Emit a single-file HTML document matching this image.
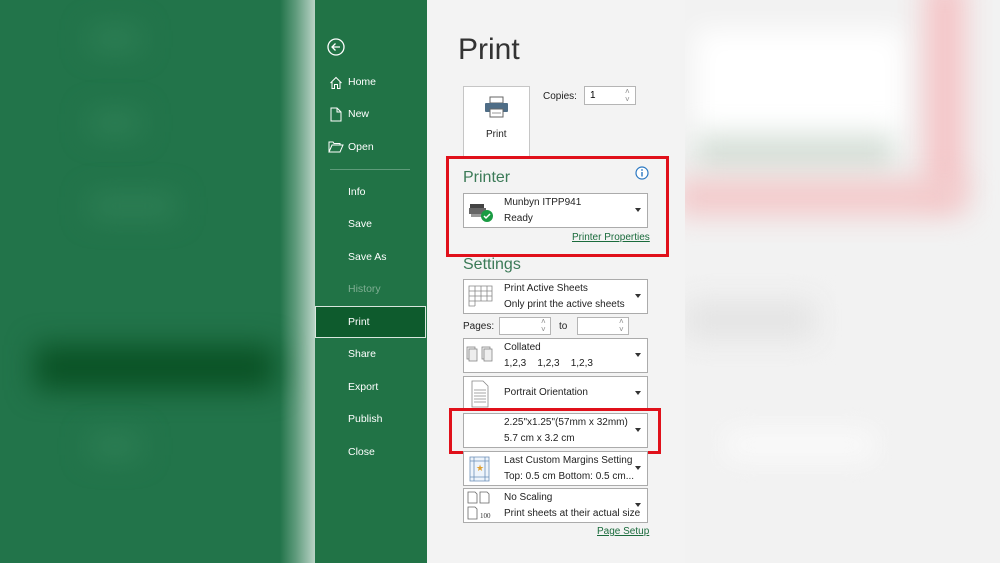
<!DOCTYPE html>
<html><head><style>
*{margin:0;padding:0;box-sizing:border-box}
body{width:1000px;height:563px;overflow:hidden;position:relative;font-family:"Segoe UI","Liberation Sans",sans-serif;background:#f2f2f2}
.abs{position:absolute}
.blur{filter:blur(14px)}
.nav{position:absolute;left:348px;color:#fff;font-size:10.5px}
.box{position:absolute;left:463px;width:185px;background:#fff;border:1px solid #ababab;font-size:10px;color:#222}
.box .t{position:absolute;left:40px}
.arr{position:absolute;right:6px;width:0;height:0;border-left:3.5px solid transparent;border-right:3.5px solid transparent;border-top:4px solid #333}
.red{position:absolute;border:3px solid #e0101a}
a{color:#1a6b3c;text-decoration:underline;font-size:10px}
.spin{position:absolute;font-size:8px;color:#888;line-height:8px}
</style></head><body>
<!-- left blurred -->
<div class="abs" style="left:0;top:0;width:300px;height:563px;background:#22744a"></div>
<div class="abs" style="left:280px;top:0;width:35px;height:563px;background:linear-gradient(90deg,#22744a,#5f9b7c 45%,#b9d3c6)"></div>
<div class="abs blur" style="left:35px;top:345px;width:240px;height:45px;background:#0a5225"></div>
<div class="abs blur" style="left:90px;top:28px;width:50px;height:22px;background:#2f8056"></div>
<div class="abs blur" style="left:90px;top:112px;width:50px;height:22px;background:#2f8056"></div>
<div class="abs blur" style="left:90px;top:195px;width:85px;height:22px;background:#2f8056"></div>
<div class="abs blur" style="left:90px;top:435px;width:50px;height:22px;background:#2f8056"></div>
<!-- right blurred -->
<div class="abs" style="left:685px;top:0;width:315px;height:563px;background:#f2f2f2;overflow:hidden">
 <div class="abs blur" style="left:10px;top:30px;width:210px;height:130px;background:#fff"></div>
 <div class="abs blur" style="left:10px;top:135px;width:200px;height:35px;background:#d3ddd5"></div>
 <div class="abs blur" style="left:240px;top:-20px;width:40px;height:215px;background:#f4c4c6"></div>
 <div class="abs blur" style="left:-10px;top:180px;width:290px;height:35px;background:#f3c7c8"></div>
 <div class="abs blur" style="left:0;top:300px;width:130px;height:40px;background:#e4e4e4"></div>
 <div class="abs blur" style="left:40px;top:430px;width:150px;height:30px;background:#fafafa"></div>
</div>
<!-- sidebar -->
<div class="abs" style="left:315px;top:0;width:112px;height:563px;background:#217346"></div>
<svg class="abs" style="left:326px;top:37px" width="20" height="20" viewBox="0 0 20 20"><circle cx="10" cy="10" r="8" fill="none" stroke="#fff" stroke-width="1.3"/><path d="M14 10H6M9.5 6.5L6 10l3.5 3.5" fill="none" stroke="#fff" stroke-width="1.3"/></svg>
<svg class="abs" style="left:329px;top:76px" width="14" height="14" viewBox="0 0 14 14"><path d="M1.5 7L7 1.5 12.5 7M3 5.5V12.5H5.5V8.5H8.5V12.5H11V5.5" fill="none" stroke="#fff" stroke-width="1"/></svg>
<svg class="abs" style="left:330px;top:107px" width="12" height="15" viewBox="0 0 12 15"><path d="M1 1H7L11 5V14H1Z M7 1V5H11" fill="none" stroke="#fff" stroke-width="1"/></svg>
<svg class="abs" style="left:328px;top:141px" width="16" height="12" viewBox="0 0 16 12"><path d="M1 11V1H5L6 2.5H12V4 M1 11L4 4H15L12 11Z" fill="none" stroke="#fff" stroke-width="1"/></svg>
<div class="nav" style="top:76px">Home</div>
<div class="nav" style="top:108px">New</div>
<div class="nav" style="top:141px">Open</div>
<div class="abs" style="left:330px;top:169px;width:80px;height:1px;background:#5e9b7a"></div>
<div class="nav" style="top:186px">Info</div>
<div class="nav" style="top:218px">Save</div>
<div class="nav" style="top:251px">Save As</div>
<div class="nav" style="top:283px;color:#7fae93">History</div>
<div class="abs" style="left:315px;top:306px;width:111px;height:32px;background:#0e5b2d;border:1px solid #d8e6dd"></div>
<div class="nav" style="top:316px">Print</div>
<div class="nav" style="top:348px">Share</div>
<div class="nav" style="top:381px">Export</div>
<div class="nav" style="top:413px">Publish</div>
<div class="nav" style="top:446px">Close</div>
<!-- content -->
<div class="abs" style="left:427px;top:0;width:258px;height:563px;background:#f3f3f3"></div>
<div class="abs" style="left:458px;top:33px;font-size:30px;color:#333;font-weight:300">Print</div>
<div class="abs" style="left:463px;top:86px;width:67px;height:70px;background:#fff;border:1px solid #c6c6c6;border-bottom:none"></div>
<svg class="abs" style="left:484px;top:96px" width="25" height="22" viewBox="0 0 25 22"><rect x="6" y="1" width="13" height="6" fill="#fff" stroke="#666"/><rect x="1" y="7" width="23" height="9" rx="1" fill="#4f6d86"/><rect x="6" y="13" width="13" height="8" fill="#fff" stroke="#666"/><line x1="8" y1="17" x2="17" y2="17" stroke="#999"/></svg>
<div class="abs" style="left:486px;top:129px;font-size:10px;color:#222">Print</div>
<div class="abs" style="left:543px;top:91px;font-size:10px;color:#222">Copies:</div>
<div class="abs" style="left:584px;top:86px;width:52px;height:19px;background:#fff;border:1px solid #b5b5b5;font-size:10px;padding:3px 5px">1</div>
<div class="spin" style="left:625px;top:88px">&#708;<br>&#709;</div>
<div class="abs" style="left:463px;top:169px;font-size:16px;color:#3b7a57">Printer</div>
<svg class="abs" style="left:635px;top:166px" width="14" height="14"><circle cx="7" cy="7" r="6" fill="#fff" stroke="#2b78c2" stroke-width="1.2"/><rect x="6.3" y="6" width="1.4" height="4.5" fill="#2b78c2"/><circle cx="7" cy="4" r=".9" fill="#2b78c2"/></svg>
<div class="box" style="top:193px;height:35px">
 <svg class="abs" style="left:4px;top:8px" width="26" height="22"><rect x="2" y="2" width="14" height="4" fill="#444"/><rect x="1" y="6" width="17" height="6" fill="#666"/><rect x="3" y="12" width="14" height="3" fill="#999"/><circle cx="19" cy="14" r="6" fill="#1a9b43"/><path d="M16 14l2 2 4-4" stroke="#fff" stroke-width="1.5" fill="none"/></svg>
 <div class="t" style="top:3px">Munbyn ITPP941</div><div class="t" style="top:19px">Ready</div><div class="arr" style="top:14px"></div></div>
<a class="abs" style="left:572px;top:232px">Printer Properties</a>
<div class="red" style="left:446px;top:156px;width:223px;height:101px"></div>
<div class="abs" style="left:463px;top:256px;font-size:16px;color:#3b7a57">Settings</div>
<div class="box" style="top:279px;height:35px">
 <svg class="abs" style="left:4px;top:5px" width="26" height="24"><path d="M1 1H24V16H1ZM1 6H24M1 11H24M7 1V21M13 1V16M19 1V16M1 16V21H7" fill="#fff" stroke="#888" stroke-width=".8"/></svg>
 <div class="t" style="top:3px">Print Active Sheets</div><div class="t" style="top:19px">Only print the active sheets</div><div class="arr" style="top:14px"></div></div>
<div class="abs" style="left:463px;top:321px;font-size:10px;color:#222">Pages:</div>
<div class="abs" style="left:499px;top:317px;width:52px;height:18px;background:#fff;border:1px solid #b5b5b5"></div>
<div class="spin" style="left:541px;top:318px">&#708;<br>&#709;</div>
<div class="abs" style="left:559px;top:321px;font-size:10px;color:#222">to</div>
<div class="abs" style="left:577px;top:317px;width:52px;height:18px;background:#fff;border:1px solid #b5b5b5"></div>
<div class="spin" style="left:619px;top:318px">&#708;<br>&#709;</div>
<div class="box" style="top:338px;height:35px">
 <svg class="abs" style="left:2px;top:6px" width="30" height="22"><g fill="#eee" stroke="#888" stroke-width=".8"><rect x="1" y="2" width="8" height="12"/><rect x="3" y="4" width="8" height="12"/><rect x="16" y="2" width="8" height="12"/><rect x="18" y="4" width="8" height="12"/></g></svg>
 <div class="t" style="top:3px">Collated</div><div class="t" style="top:19px">1,2,3&nbsp;&nbsp;&nbsp;&nbsp;1,2,3&nbsp;&nbsp;&nbsp;&nbsp;1,2,3</div><div class="arr" style="top:14px"></div></div>
<div class="box" style="top:376px;height:35px">
 <svg class="abs" style="left:7px;top:3px" width="18" height="28"><path d="M1 1H12L17 6V27H1ZM3 10H15M3 13H15M3 16H15M3 19H15M3 22H15" fill="#fff" stroke="#888" stroke-width=".8"/></svg>
 <div class="t" style="top:10px">Portrait Orientation</div><div class="arr" style="top:14px"></div></div>
<div class="box" style="top:413px;height:35px">
 <div class="t" style="top:3px">2.25"x1.25"(57mm x 32mm)</div><div class="t" style="top:19px">5.7 cm x 3.2 cm</div><div class="arr" style="top:14px"></div></div>
<div class="red" style="left:449px;top:408px;width:212px;height:46px"></div>
<div class="box" style="top:451px;height:35px">
 <svg class="abs" style="left:5px;top:4px" width="22" height="26"><path d="M1 1H20V25H1ZM1 5H20M1 21H20M5 1V25M16 1V25" fill="#eef4fb" stroke="#6b8fb8" stroke-width=".8"/><text x="7" y="15" font-size="9" fill="#e0a030">★</text></svg>
 <div class="t" style="top:3px">Last Custom Margins Setting</div><div class="t" style="top:19px">Top: 0.5 cm Bottom: 0.5 cm...</div><div class="arr" style="top:14px"></div></div>
<div class="box" style="top:488px;height:35px">
 <svg class="abs" style="left:3px;top:2px" width="34" height="30"><g fill="#fff" stroke="#666" stroke-width=".8"><path d="M1 1H8L10 3V12H1Z"/><path d="M13 1H20L22 3V12H13Z"/><path d="M1 16H8L10 18V28H1Z"/></g><text x="13" y="27" font-size="7" fill="#333" font-family="Liberation Serif">100</text></svg>
 <div class="t" style="top:3px">No Scaling</div><div class="t" style="top:19px">Print sheets at their actual size</div><div class="arr" style="top:14px"></div></div>
<a class="abs" style="left:597px;top:526px">Page Setup</a>
</body></html>
